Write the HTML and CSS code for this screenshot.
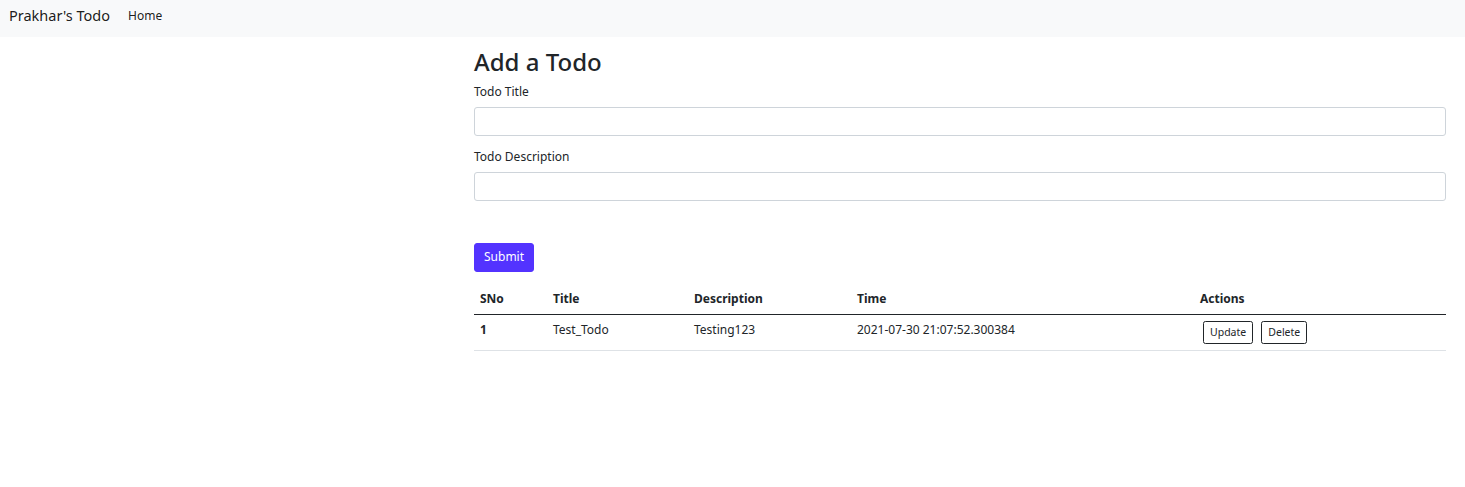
FILE: index.html
```html
<!DOCTYPE html>
<html lang="en">
<head>
<meta charset="utf-8">
<title>Prakhar's Todo</title>
<link rel="stylesheet" href="styles.css">
</head>
<body>
<nav class="navbar">
  <a class="brand" href="#">Prakhar's Todo</a>
  <a class="nav-link" href="#">Home</a>
</nav>
<main class="container">
  <h2 class="heading">Add a Todo</h2>
  <form class="todo-form">
    <div class="field">
      <label class="label" for="title">Todo Title</label>
      <input class="input" type="text" id="title">
    </div>
    <div class="field">
      <label class="label" for="desc">Todo Description</label>
      <input class="input" type="text" id="desc">
    </div>
    <button class="btn-submit" type="submit">Submit</button>
  </form>
  <table class="table">
    <thead>
      <tr>
        <th class="c-sno">SNo</th>
        <th class="c-title">Title</th>
        <th class="c-desc">Description</th>
        <th class="c-time">Time</th>
        <th class="c-actions">Actions</th>
      </tr>
    </thead>
    <tbody>
      <tr>
        <th>1</th>
        <td>Test_Todo</td>
        <td>Testing123</td>
        <td>2021-07-30 21:07:52.300384</td>
        <td class="actions"><button class="btn-sm" type="button">Update</button> <button class="btn-sm" type="button">Delete</button></td>
      </tr>
    </tbody>
  </table>
</main>
</body>
</html>
```
FILE: styles.css
```css
* { box-sizing: border-box; }
html, body { margin: 0; padding: 0; }
body {
  font-family: "Noto Sans", "Open Sans", sans-serif;
  font-size: 12px;
  line-height: 1.5;
  color: #212529;
  background: #fff;
}
.navbar {
  height: 37px;
  background: #f8f9fa;
  display: flex;
  align-items: center;
  padding: 0 9px 6px;
}
.brand {
  font-size: 14.5px;
  color: rgba(0,0,0,.9);
  text-decoration: none;
  margin-right: 18px;
  line-height: 1;
}
.nav-link {
  font-size: 12px;
  color: rgba(0,0,0,.9);
  text-decoration: none;
  line-height: 1;
}
.container {
  margin: 11px 19px 0 474px;
}
.heading {
  font-size: 24px;
  font-weight: 500;
  line-height: 1.2;
  margin: 0 0 6px;
}
.field { margin-bottom: 12px; }
.label {
  display: block;
  margin-bottom: 6px;
  line-height: 18px;
}
.input {
  display: block;
  width: 100%;
  height: 29px;
  border: 1px solid #ced4da;
  border-radius: 3px;
  background: #fff;
  font: inherit;
  padding: 4px 9px;
}
.btn-submit {
  margin-top: 42px;
  display: block;
  height: 29px;
  padding: 0 9px;
  font: inherit;
  font-size: 12px;
  color: #fff;
  background: #5333ff;
  border: 1px solid #5333ff;
  border-radius: 3px;
}
.table {
  width: 100%;
  border-collapse: collapse;
  margin-top: 12px;
  table-layout: fixed;
}
.table th, .table td {
  text-align: left;
  padding: 6px 6px;
  vertical-align: top;
  line-height: 18px;
}
.table thead th {
  font-weight: 700;
  border-bottom: 1px solid #212529;
}
.table tbody th { font-weight: 700; }
.table tbody th, .table tbody td {
  border-bottom: 1px solid #dee2e6;
  padding-top: 6px;
  padding-bottom: 6px;
  height: 35px;
}
.c-sno { width: 73px; }
.c-title { width: 141px; }
.c-desc { width: 163px; }
.c-time { width: 343px; }
.btn-sm {
  font: inherit;
  font-size: 10.5px;
  line-height: 15px;
  padding: 3px 6px;
  margin: 0 2px 0 3px;
  color: #212529;
  background: #fff;
  border: 1px solid #212529;
  border-radius: 2.4px;
  vertical-align: top;
}
```
